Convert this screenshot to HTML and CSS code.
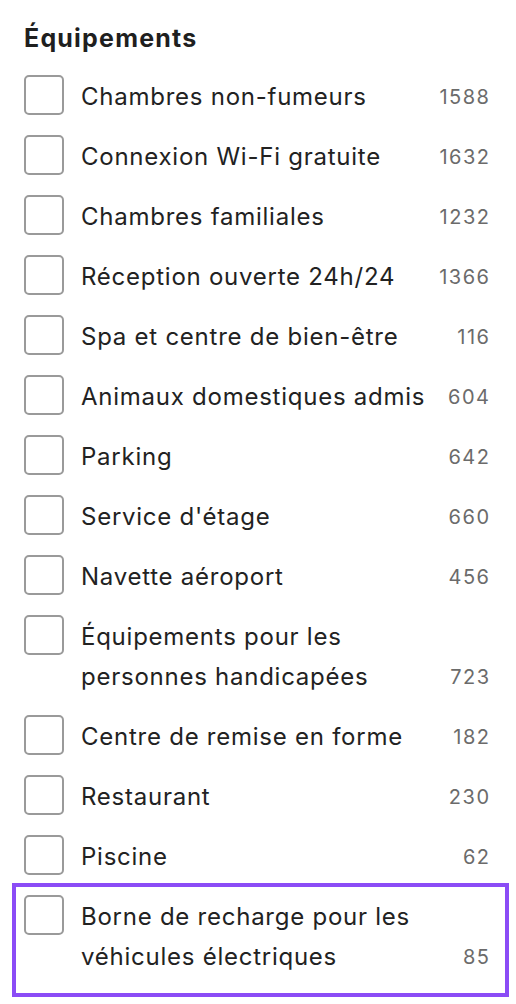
FILE: index.html
```html
<!DOCTYPE html>
<html lang="fr">
<head>
  <meta charset="UTF-8">
  <meta name="viewport" content="width=device-width, initial-scale=1.0">
  <title>Équipements</title>
  <link rel="stylesheet" href="styles.css">
</head>
<body>
  <div class="filters">
    <h2 class="filters-title">Équipements</h2>
    <ul class="options">
      <li class="option">
        <input type="checkbox" class="box" id="f1">
        <label for="f1" class="option-label">Chambres non-fumeurs</label>
        <span class="count">1588</span>
      </li>
      <li class="option">
        <input type="checkbox" class="box" id="f2">
        <label for="f2" class="option-label">Connexion Wi-Fi gratuite</label>
        <span class="count">1632</span>
      </li>
      <li class="option">
        <input type="checkbox" class="box" id="f3">
        <label for="f3" class="option-label">Chambres familiales</label>
        <span class="count">1232</span>
      </li>
      <li class="option">
        <input type="checkbox" class="box" id="f4">
        <label for="f4" class="option-label">Réception ouverte 24h/24</label>
        <span class="count">1366</span>
      </li>
      <li class="option">
        <input type="checkbox" class="box" id="f5">
        <label for="f5" class="option-label">Spa et centre de bien-être</label>
        <span class="count">116</span>
      </li>
      <li class="option">
        <input type="checkbox" class="box" id="f6">
        <label for="f6" class="option-label">Animaux domestiques admis</label>
        <span class="count">604</span>
      </li>
      <li class="option">
        <input type="checkbox" class="box" id="f7">
        <label for="f7" class="option-label">Parking</label>
        <span class="count">642</span>
      </li>
      <li class="option">
        <input type="checkbox" class="box" id="f8">
        <label for="f8" class="option-label">Service d'étage</label>
        <span class="count">660</span>
      </li>
      <li class="option">
        <input type="checkbox" class="box" id="f9">
        <label for="f9" class="option-label">Navette aéroport</label>
        <span class="count">456</span>
      </li>
      <li class="option">
        <input type="checkbox" class="box" id="f10">
        <label for="f10" class="option-label">Équipements pour les personnes handicapées</label>
        <span class="count">723</span>
      </li>
      <li class="option">
        <input type="checkbox" class="box" id="f11">
        <label for="f11" class="option-label">Centre de remise en forme</label>
        <span class="count">182</span>
      </li>
      <li class="option">
        <input type="checkbox" class="box" id="f12">
        <label for="f12" class="option-label">Restaurant</label>
        <span class="count">230</span>
      </li>
      <li class="option">
        <input type="checkbox" class="box" id="f13">
        <label for="f13" class="option-label">Piscine</label>
        <span class="count">62</span>
      </li>
      <li class="option option--active">
        <input type="checkbox" class="box" id="f14">
        <label for="f14" class="option-label">Borne de recharge pour les véhicules électriques</label>
        <span class="count">85</span>
      </li>
    </ul>
  </div>
</body>
</html>
```

FILE: styles.css
```css
/* General styling */
body {
  margin: 0;
  font-family: 'Inter', 'Liberation Sans', sans-serif;
  background: #fff;
  color: #222;
}

.filters {
  padding: 22px 7px 0 12px;
}

.filters-title {
  margin: 0 0 9px 12px;
  font-size: 25px;
  line-height: 32px;
  font-weight: 700;
  letter-spacing: 1.2px;
  color: #1f1f1f;
}

.options {
  list-style: none;
  margin: 0;
  padding: 0;
}

.option {
  display: flex;
  align-items: flex-start;
  border: 4px solid transparent;
  padding: 8px 16px 4px 8px;
}

.option--active {
  border-color: #8b4cf6;
  padding-bottom: 18px;
}

.box {
  appearance: none;
  -webkit-appearance: none;
  flex-shrink: 0;
  box-sizing: border-box;
  width: 40px;
  height: 40px;
  margin: 0;
  border: 2px solid #9a9a9a;
  border-radius: 5px;
  background: #fff;
}

.option-label {
  flex: 1;
  margin: 2px 0 -2px 17px;
  font-size: 24px;
  line-height: 40px;
  letter-spacing: 0.75px;
  color: #222;
}

.count {
  align-self: flex-end;
  margin: 0 -1.5px -2px 16px;
  font-size: 20px;
  line-height: 40px;
  letter-spacing: 1.5px;
  color: #6b6b6b;
}
```
